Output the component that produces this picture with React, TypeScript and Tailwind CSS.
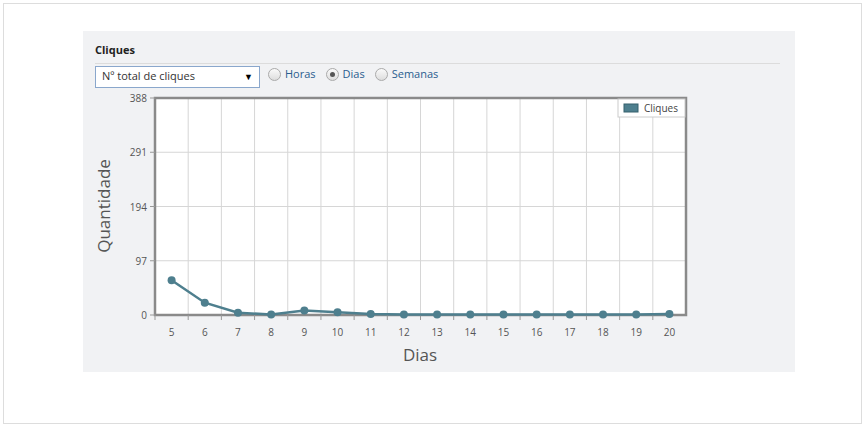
const data = [62, 22, 4, 1, 8, 5, 2, 1, 1, 1, 1, 1, 1, 1, 1, 2];
const days = [5, 6, 7, 8, 9, 10, 11, 12, 13, 14, 15, 16, 17, 18, 19, 20];

// plot area in svg coords (svg origin = panel x 83, page y 95)
const L = 72;
const R = 603;
const T = 4;
const B = 221;
const cw = (R - L) / 16;
const yv = (v: number) => B - (v * (B - T)) / 388;

function Chart() {
  const pts = data.map((v, i) => [L + cw * (i + 0.5), yv(v)]);
  return (
    <svg width="712" height="277" className="block mt-[6px]" style={{ fontFamily: "'Open Sans', sans-serif" }}>
      <rect x={L} y={T} width={R - L} height={B - T} fill="#fff" />
      {days.map((_, i) => (
        <line key={i} x1={L + cw * (i + 1)} x2={L + cw * (i + 1)} y1={T} y2={B} stroke="#d6d6d6" />
      ))}
      {[97, 194, 291].map((v) => (
        <line key={v} x1={L} x2={R} y1={yv(v)} y2={yv(v)} stroke="#d6d6d6" />
      ))}
      <rect x={L} y={T} width={R - L} height={B - T} fill="none" stroke="#8a8a8a" strokeWidth="2.5" />
      {[0, 97, 194, 291, 388].map((v) => (
        <g key={v}>
          <line x1={L - 5} x2={L} y1={yv(v)} y2={yv(v)} stroke="#999" />
          <text x={L - 8} y={yv(v) + 4} fontSize="10" fill="#555" textAnchor="end">{v}</text>
        </g>
      ))}
      {days.map((d, i) => (
        <g key={d}>
          <line x1={L + cw * i} x2={L + cw * i} y1={B} y2={B + 5} stroke="#999" />
          <text x={L + cw * (i + 0.5)} y={B + 21} fontSize="10" fill="#555" textAnchor="middle">{d}</text>
        </g>
      ))}
      <text x={337} y={267} fontSize="17" fill="#555" textAnchor="middle">Dias</text>
      <text transform="translate(27 112) rotate(-90)" fontSize="17" fill="#555" textAnchor="middle">Quantidade</text>
      <polyline points={pts.map((p) => p.join(",")).join(" ")} fill="none" stroke="#4e7f8e" strokeWidth="2.5" />
      {pts.map((p, i) => (
        <circle key={i} cx={p[0]} cy={p[1]} r="4" fill="#4e7f8e" />
      ))}
      <rect x={535} y={5} width={67} height={18} fill="#fff" stroke="#ccc" />
      <rect x={541} y={10} width={14} height={8} fill="#4e7f8e" stroke="#35606d" />
      <text x={561} y={18} fontSize="10" fill="#444">Cliques</text>
    </svg>
  );
}

function Radio({ label, checked }: { label: string; checked?: boolean }) {
  return (
    <label className="flex items-center gap-1">
      <span className="w-[13px] h-[13px] rounded-full border border-[#aaa] bg-gradient-to-b from-[#fafafa] to-[#ddd] flex items-center justify-center">
        {checked && <span className="w-[5px] h-[5px] rounded-full bg-[#555]" />}
      </span>
      <span className="text-[#2a5d8f] text-[11px]">{label}</span>
    </label>
  );
}

export default function App() {
  return (
    <div className="w-[865px] h-[427px] bg-white p-[3px]" style={{ fontFamily: "'Open Sans', 'Liberation Sans', sans-serif" }}>
      <div className="w-[859px] h-[421px] border border-[#ddd] pt-[27px] pl-[79px]">
        <div className="w-[712px] h-[341px] bg-[#f1f2f4]">
          <div className="ml-[12px] mr-[15px] pt-[11px] border-b border-[#dcdcdc] pb-[4px]">
            <div className="text-[11px] font-bold text-[#222]">Cliques</div>
          </div>
          <div className="flex items-center gap-[8px] ml-[12px] mt-[2px]">
            <div className="w-[165px] h-[22px] bg-white border border-[#8aa7cc] flex items-center justify-between px-[6px] text-[11px] text-[#333]">
              <span>Nº total de cliques</span>
              <span className="text-[9px] text-black">▼</span>
            </div>
            <div className="flex gap-[10px] -mt-[5px]">
              <Radio label="Horas" />
              <Radio label="Dias" checked />
              <Radio label="Semanas" />
            </div>
          </div>
          <Chart />
        </div>
      </div>
    </div>
  );
}
